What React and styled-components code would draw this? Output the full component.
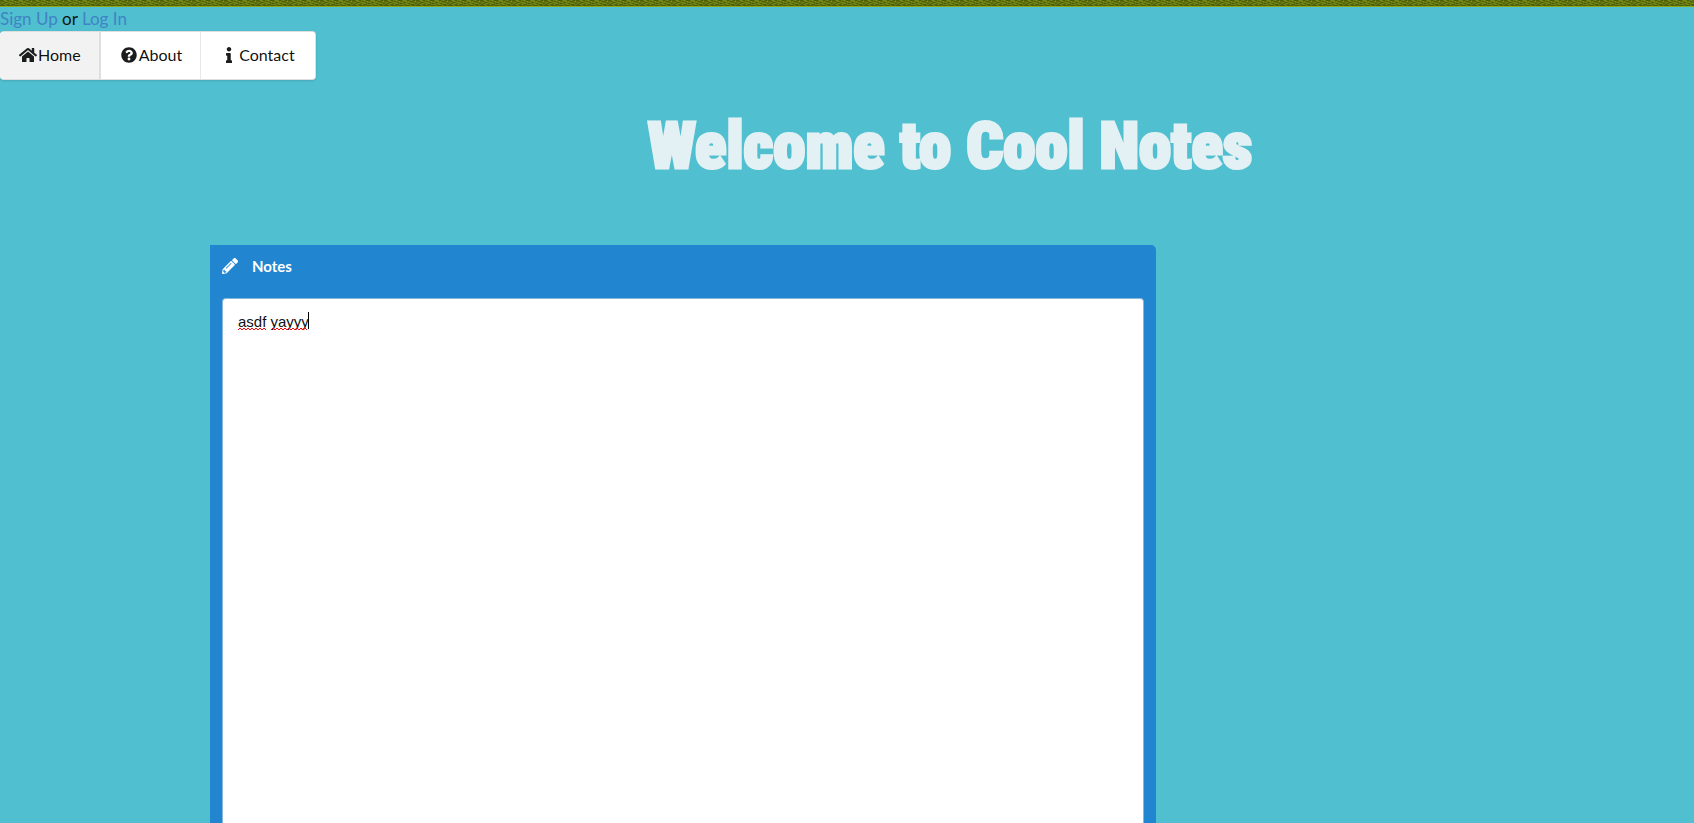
import React from "react";
import styled, { createGlobalStyle } from "styled-components";
import { FaHome, FaQuestionCircle, FaInfo, FaPencilAlt } from "react-icons/fa";

const GlobalStyle = createGlobalStyle`
  *, *::before, *::after { box-sizing: border-box; }
  body {
    margin: 0;
    background: #50bfd0;
    color: rgba(0, 0, 0, 0.87);
    font-family: Lato, "Liberation Sans", sans-serif;
  }
`;

const Page = styled.div`
  display: flex;
  flex-direction: column;
  min-height: 100vh;
`;

const Grass = styled.svg`
  display: block;
  width: 100%;
  height: 7px;
`;

const Account = styled.div`
  font-size: 17px;
  line-height: 24px;
  color: #111;
`;

const AccountLink = styled.a`
  color: #4183c4;
  text-decoration: none;
`;

const Menu = styled.nav`
  display: flex;
  align-self: flex-start;
  height: 49px;
  background: #fff;
  border: 1px solid rgba(34, 36, 38, 0.15);
  border-left: 0;
  border-radius: 4px;
  box-shadow: 0 1px 2px rgba(34, 36, 38, 0.15);
  overflow: hidden;
`;

const MenuItem = styled.a`
  display: flex;
  align-items: center;
  padding: 0 18px 2px;
  font-size: 16px;
  line-height: 16px;
  color: rgba(0, 0, 0, 0.95);
  text-decoration: none;
  background: ${(p) => (p.$active ? "#f2f2f2" : "#fff")};
  border-right: ${(p) => (p.$active ? "2px solid #dededf" : "1px solid #e8e8e9")};

  &:last-child {
    padding-right: 20px;
    border-right: 0;
  }
`;

const MenuIcon = styled.span`
  display: flex;
  color: #1b1c1d;

  svg {
    flex: none;
    width: 20px;
    height: 16px;
  }
`;

const Main = styled.main`
  flex: 1;
  display: flex;
  flex-direction: column;
  margin-left: 210px;
`;

const Title = styled.h1`
  margin: 0;
  padding: 30px 4px 63px 0;
  font-family: Impact, "Roboto Condensed", "Open Sans Condensed", Roboto, sans-serif;
  font-size: 65px;
  font-weight: 900;
  line-height: 72px;
  text-align: center;
  color: #e4f1f4;
  -webkit-text-stroke: 3px #e4f1f4;
`;

const Panel = styled.section`
  flex: 1;
  display: flex;
  flex-direction: column;
  width: 63.75%;
  padding: 0 12px;
  background: #2185d0;
  border-radius: 0 5px 0 0;
`;

const PanelLabel = styled.label`
  display: flex;
  align-items: center;
  gap: 14px;
  height: 41px;
  margin-bottom: 12px;
  font-size: 15px;
  font-weight: 700;
  color: #fff;

  svg { font-size: 16px; }
`;

const Editor = styled.div`
  position: relative;
  flex: 1;
  display: flex;
`;

const NoteText = styled.textarea`
  flex: 1;
  min-height: 480px;
  padding: 13px 15px;
  border: 1px solid #85b7d9;
  border-bottom: 0;
  border-radius: 4px 4px 0 0;
  outline: 0;
  resize: none;
  font-family: "Liberation Sans", Arial, sans-serif;
  font-size: 15px;
  line-height: 20px;
  color: #111;
  caret-color: transparent;
`;

const SpellingMarks = styled.svg`
  position: absolute;
  top: 13px;
  left: 16px;
  pointer-events: none;
`;

function wave(from, to) {
  let d = `M${from} 19`;
  for (let x = from + 2, up = true; x <= to; x += 2, up = !up) {
    d += `L${x} ${up ? 17 : 19}`;
  }
  return d;
}

const ITEMS = [
  { label: "Home", Icon: FaHome, active: true },
  { label: "About", Icon: FaQuestionCircle },
  { label: "Contact", Icon: FaInfo },
];

function GrassStrip() {
  return (
    <Grass aria-hidden="true">
      <defs>
        <pattern id="grass" width="32" height="7" patternUnits="userSpaceOnUse">
          <rect width="32" height="7" fill="#66780f" />
          <g shapeRendering="crispEdges" fill="none">
            <path
              stroke="#4c5c08"
              d="M0 .5h3M7 .5h2M14 .5h4M23 .5h2M29 .5h2M2 1.5h2M10 1.5h2M17 1.5h1M26 1.5h3M0 2.5h1M5 2.5h3M13 2.5h2M20 2.5h2M29 2.5h1M3 3.5h2M9 3.5h1M16 3.5h3M24 3.5h2M31 3.5h1M1 4.5h2M7 4.5h2M12 4.5h3M20 4.5h1M27 4.5h3M0 5.5h5M7 5.5h6M15 5.5h4M21 5.5h5M28 5.5h3"
            />
            <path
              stroke="#768c14"
              d="M4 .5h2M11 .5h2M19 .5h3M27 .5h1M6 1.5h2M14 1.5h2M21 1.5h2M31 1.5h1M2 2.5h1M9 2.5h3M17 2.5h2M24 2.5h2M6 3.5h2M12 3.5h2M21 3.5h2M28 3.5h2M4 4.5h1M10 4.5h1M17 4.5h2M23 4.5h2"
            />
            <path stroke="#8eaa16" d="M0 6.5h32" />
          </g>
        </pattern>
      </defs>
      <rect width="100%" height="7" fill="url(#grass)" />
    </Grass>
  );
}

export default function App() {
  return (
    <>
      <GlobalStyle />
      <Page>
        <GrassStrip />
        <Account>
          <AccountLink href="#signup">Sign Up</AccountLink> or{" "}
          <AccountLink href="#login">Log In</AccountLink>
        </Account>
        <Menu>
          {ITEMS.map(({ label, Icon, active }) => (
            <MenuItem key={label} href={`#${label.toLowerCase()}`} $active={active}>
              <MenuIcon><Icon /></MenuIcon>
              {label}
            </MenuItem>
          ))}
        </Menu>
        <Main>
          <Title>Welcome to Cool Notes</Title>
          <Panel>
            <PanelLabel htmlFor="notes">
              <FaPencilAlt />
              Notes
            </PanelLabel>
            <Editor>
              <NoteText id="notes" defaultValue="asdf yayyy" spellCheck="true" />
              <SpellingMarks width="74" height="22" aria-hidden="true">
                <path d={wave(0, 28)} fill="none" stroke="#f00" />
                <path d={wave(33, 70)} fill="none" stroke="#f00" />
                <path d="M70.5 1v17" stroke="#000" shapeRendering="crispEdges" />
              </SpellingMarks>
            </Editor>
          </Panel>
        </Main>
      </Page>
    </>
  );
}
